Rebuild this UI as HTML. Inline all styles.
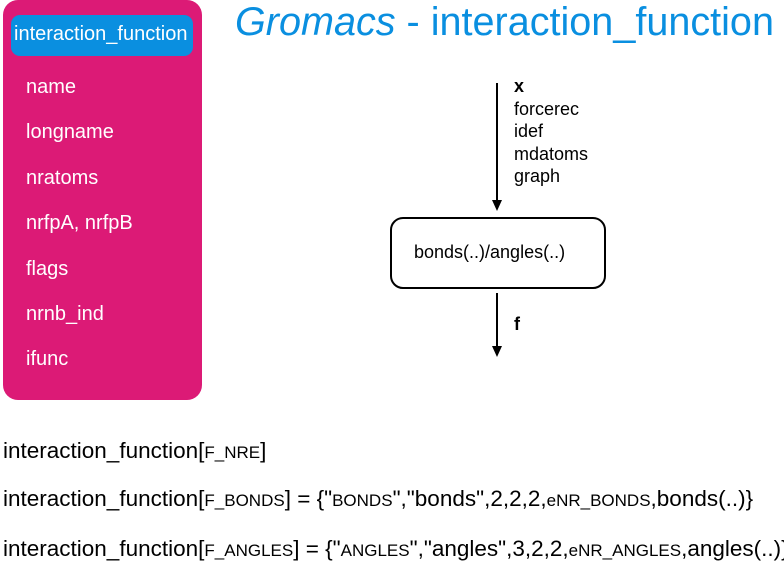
<!DOCTYPE html>
<html><head><style>
body{margin:0;width:784px;height:563px;background:#fff;position:relative;font-family:"Liberation Sans",sans-serif;overflow:hidden}
.a{position:absolute;white-space:nowrap}
#side{position:absolute;left:3px;top:0;width:199px;height:400px;background:#dc1a76;border-radius:15px}
#pill{position:absolute;left:11px;top:15px;width:182px;height:41px;background:#0a8fe0;border-radius:9px}
.s{color:#fff;font-size:20px;left:26px}
.r{color:#000;font-size:18px;left:514px;line-height:22.5px}
.b{color:#000;font-size:22.5px;left:3px}
.sm{font-size:17px}
</style></head><body>
<div id="side"></div><div id="pill"></div>
<div class="a" style="left:14px;top:23px;color:#fff;font-size:20px">interaction_function</div>
<div class="a s" style="top:76px">name</div>
<div class="a s" style="top:121px">longname</div>
<div class="a s" style="top:167px">nratoms</div>
<div class="a s" style="top:212px">nrfpA, nrfpB</div>
<div class="a s" style="top:258px">flags</div>
<div class="a s" style="top:303px">nrnb_ind</div>
<div class="a s" style="top:348px">ifunc</div>
<div class="a" style="left:235px;top:0px;color:#0a8fe0;font-size:39.6px"><i>Gromacs</i> - interaction_function</div>
<div class="a r" style="top:75px"><b>x</b><br>forcerec<br>idef<br>mdatoms<br>graph</div>
<div class="a r" style="top:313px"><b>f</b></div>
<svg class="a" style="left:0;top:0" width="784" height="563">
<line x1="497" y1="83" x2="497" y2="202" stroke="#000" stroke-width="2"/>
<polygon points="492,200 502,200 497,211" fill="#000"/>
<line x1="497" y1="293" x2="497" y2="348" stroke="#000" stroke-width="2"/>
<polygon points="492,346 502,346 497,357" fill="#000"/>
<rect x="391" y="218" width="214" height="70" rx="12" fill="#fff" stroke="#000" stroke-width="2"/>
</svg>
<div class="a" style="left:414px;top:242px;font-size:18px">bonds(..)/angles(..)</div>
<div class="a b" style="top:438px">interaction_function[<span class="sm">F_NRE</span>]</div>
<div class="a b" style="top:486px">interaction_function[<span class="sm">F_BONDS</span>] = {"<span class="sm">BONDS</span>","bonds",2,2,2,<span class="sm">eNR_BONDS</span>,bonds(..)}</div>
<div class="a b" style="top:536px">interaction_function[<span class="sm">F_ANGLES</span>] = {"<span class="sm">ANGLES</span>","angles",3,2,2,<span class="sm">eNR_ANGLES</span>,angles(..)}</div>
</body></html>
